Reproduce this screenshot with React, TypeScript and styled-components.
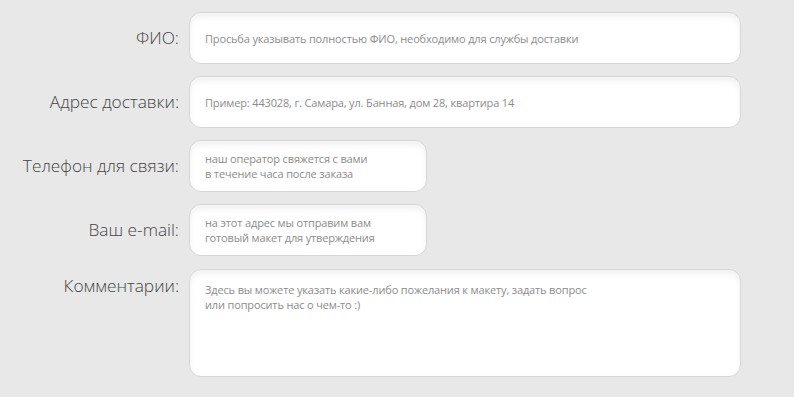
import React from 'react';
import styled, { createGlobalStyle } from 'styled-components';

const GlobalStyle = createGlobalStyle`
  html, body {
    margin: 0;
    padding: 0;
    background: #e8e8e8;
  }
  body {
    font-family: "Open Sans", "Noto Sans", sans-serif;
  }
`;

const Form = styled.form`
  display: grid;
  grid-template-columns: 179px 552px;
  column-gap: 10px;
  row-gap: 12px;
  padding: 12px 0 20px;
`;

const Label = styled.label<{ $top?: boolean }>`
  justify-self: end;
  align-self: ${(p) => (p.$top ? 'start' : 'center')};
  margin-top: ${(p) => (p.$top ? '7px' : '0')};
  font-size: 17.3px;
  font-weight: 300;
  line-height: 22px;
  color: #444;
  white-space: nowrap;
`;

const Field = styled.div<{ $short?: boolean; $tall?: boolean }>`
  box-sizing: border-box;
  width: ${(p) => (p.$short ? '238px' : '552px')};
  height: ${(p) => (p.$tall ? '108px' : '52px')};
  margin-top: ${(p) => (p.$tall ? '1px' : '0')};
  padding: ${(p) => (p.$tall ? '12px 15px' : '0 15px')};
  display: flex;
  flex-direction: column;
  justify-content: ${(p) => (p.$tall ? 'flex-start' : 'center')};
  background: #fff;
  border: 1px solid #d7d7d7;
  border-radius: 12px;
  box-shadow: inset 0 4px 6px rgba(0, 0, 0, 0.06);
  cursor: text;
`;

const Placeholder = styled.span`
  font-size: 11px;
  line-height: 15px;
  letter-spacing: -0.15px;
  color: #8c8c8c;
  white-space: pre-line;
`;

const fields = [
  { label: 'ФИО:', hint: 'Просьба указывать полностью ФИО, необходимо для службы доставки' },
  { label: 'Адрес доставки:', hint: 'Пример: 443028, г. Самара, ул. Банная, дом 28, квартира 14' },
  { label: 'Телефон для связи:', hint: 'наш оператор свяжется с вами\nв течение часа после заказа', short: true },
  { label: 'Ваш e-mail:', hint: 'на этот адрес мы отправим вам\nготовый макет для утверждения', short: true },
  {
    label: 'Комментарии:',
    hint: 'Здесь вы можете указать какие-либо пожелания к макету, задать вопрос\nили попросить нас о чем-то :)',
    tall: true,
  },
];

export default function App() {
  return (
    <>
      <GlobalStyle />
      <Form>
        {fields.map((f) => (
          <React.Fragment key={f.label}>
            <Label $top={f.tall}>{f.label}</Label>
            <Field $short={f.short} $tall={f.tall}>
              <Placeholder>{f.hint}</Placeholder>
            </Field>
          </React.Fragment>
        ))}
      </Form>
    </>
  );
}
